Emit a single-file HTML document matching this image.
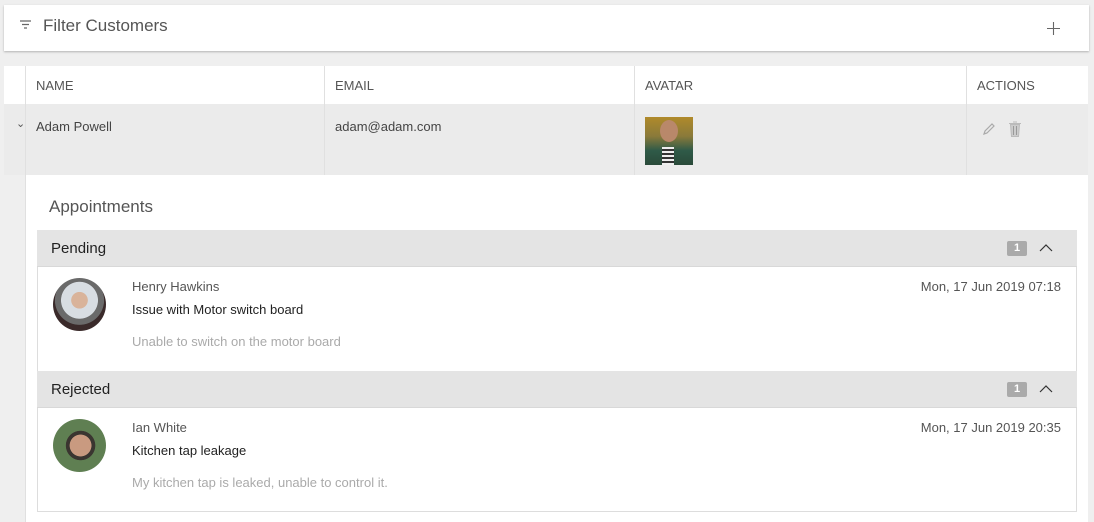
<!DOCTYPE html>
<html><head><style>
*{box-sizing:border-box;margin:0;padding:0}
body{width:1094px;height:522px;background:#efefef;font-family:"Liberation Sans",sans-serif;position:relative;overflow:hidden;color:#444}
.abs{position:absolute}
.card{left:4px;top:5px;width:1085px;height:46px;background:#fff;box-shadow:0 1px 2px rgba(0,0,0,.25)}
.hdr{top:66px;height:38px;background:#fff;font-size:13px;color:#555}
.row{top:104px;height:71px;background:#ebebeb;font-size:13px;color:#444}
.vl{position:absolute;top:66px;width:1px;height:109px;background:#e0e0e0}
.sec{left:37px;width:1040px;height:37px;background:#e4e4e4;border-bottom:1px solid #d8d8d8;font-size:15px;color:#222;padding:10px 14px}
.badge{position:absolute;right:50px;top:11px;width:20px;height:15px;background:#aaa;color:#fff;font-size:11px;font-weight:bold;text-align:center;line-height:15px;border-radius:2px}
.car{position:absolute;right:24px;top:13px}
.item{left:37px;width:1040px;background:#fff;border-left:1px solid #ddd;border-right:1px solid #ddd}
.av{position:absolute;left:15px;width:53px;height:53px;border-radius:50%}
.t{position:absolute;left:94px;font-size:13px}
</style></head><body>
<div class="abs card">
<svg class="abs" style="left:15px;top:14px" width="13" height="11" viewBox="0 0 13 11"><path d="M1 2h11M3 5.5h7M5 9h3" stroke="#666" stroke-width="1.2"/></svg>
<div class="abs" style="left:39px;top:11px;font-size:17px;color:#555">Filter Customers</div>
<svg class="abs" style="left:1043px;top:17px" width="13" height="13" viewBox="0 0 13 13"><path d="M6.5 0v13M0 6.5h13" stroke="#666" stroke-width="1.1"/></svg>
</div>
<div class="abs hdr" style="left:4px;width:1084px"></div>
<div class="abs hdr" style="left:36px;top:78px;height:auto;background:none">NAME</div>
<div class="abs hdr" style="left:335px;top:78px;height:auto;background:none">EMAIL</div>
<div class="abs hdr" style="left:645px;top:78px;height:auto;background:none">AVATAR</div>
<div class="abs hdr" style="left:977px;top:78px;height:auto;background:none">ACTIONS</div>
<div class="abs row" style="left:4px;width:1084px"></div>
<div class="vl" style="left:25px;height:456px"></div><div class="vl" style="left:324px"></div><div class="vl" style="left:634px"></div><div class="vl" style="left:966px"></div>
<div class="abs" style="left:16px;top:117px;font-size:11px;color:#555">&#8964;</div>
<div class="abs" style="left:36px;top:119px;font-size:13px;color:#444">Adam Powell</div>
<div class="abs" style="left:335px;top:119px;font-size:13px;color:#444">adam@adam.com</div>
<div class="abs" style="left:645px;top:117px;width:48px;height:48px;background:linear-gradient(180deg,#b08a2a 0%,#8a7a3a 40%,#2f5a48 70%,#2a4a3a 100%)"><div style="position:absolute;left:15px;top:3px;width:18px;height:22px;border-radius:50%;background:#b9886a"></div><div style="position:absolute;left:17px;top:30px;width:12px;height:18px;background:repeating-linear-gradient(#eee 0 2px,#333 2px 4px)"></div></div>
<svg class="abs" style="left:982px;top:122px" width="14" height="14" viewBox="0 0 14 14"><path d="M2 12l1-3 7-7 2 2-7 7z" fill="none" stroke="#aaa" stroke-width="1.2"/></svg>
<svg class="abs" style="left:1008px;top:121px" width="14" height="16" viewBox="0 0 14 16"><path d="M1 2.5h12M5 1h4M2.5 3.5l1 12h7l1-12z" fill="#ccc" stroke="#bbb"/><path d="M5.5 5v9M8.5 5v9" stroke="#999"/></svg>
<div class="abs" style="left:26px;top:175px;width:1062px;height:347px;background:#fff"></div>
<div class="abs" style="left:49px;top:197px;font-size:17px;color:#555">Appointments</div>
<div class="abs sec" style="top:230px">Pending<span class="badge">1</span><svg class="car" width="14" height="9" viewBox="0 0 14 9"><path d="M1 8l6-6 6 6" fill="none" stroke="#333" stroke-width="1.2"/></svg></div>
<div class="abs item" style="top:267px;height:104px">
<div class="av" style="top:11px;background:radial-gradient(circle at 50% 42%,#d9b39a 0 20%,#d8dde2 21% 45%,#6a6a6a 46% 60%,#3a2a2a 61%)"></div>
<div class="t" style="top:12px;color:#555">Henry Hawkins</div>
<div class="t" style="top:35px;color:#222">Issue with Motor switch board</div>
<div class="t" style="top:67px;color:#aaa">Unable to switch on the motor board</div>
<div class="abs" style="right:15px;top:12px;font-size:13px;color:#555">Mon, 17 Jun 2019 07:18</div>
</div>
<div class="abs sec" style="top:371px">Rejected<span class="badge">1</span><svg class="car" width="14" height="9" viewBox="0 0 14 9"><path d="M1 8l6-6 6 6" fill="none" stroke="#333" stroke-width="1.2"/></svg></div>
<div class="abs item" style="top:408px;height:104px;border-bottom:1px solid #ddd">
<div class="av" style="top:11px;background:radial-gradient(circle at 52% 50%,#c99a80 0 28%,#3a3530 29% 38%,#5f7f52 39%)"></div>
<div class="t" style="top:12px;color:#555">Ian White</div>
<div class="t" style="top:35px;color:#222">Kitchen tap leakage</div>
<div class="t" style="top:67px;color:#aaa">My kitchen tap is leaked, unable to control it.</div>
<div class="abs" style="right:15px;top:12px;font-size:13px;color:#555">Mon, 17 Jun 2019 20:35</div>
</div>
</body></html>
